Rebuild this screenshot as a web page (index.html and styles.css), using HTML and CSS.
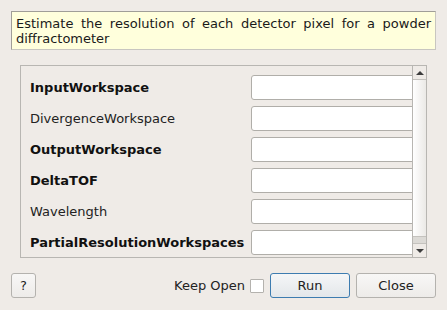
FILE: index.html
```html
<!DOCTYPE html>
<html lang="en">
  <head>
    <meta charset="UTF-8" />
    <title>Estimate Resolution</title>
    <link rel="stylesheet" href="styles.css">
  </head>
  <body>
    <div class="dialog">
      <p class="description">
        Estimate the resolution of each detector pixel for a powder
        diffractometer
      </p>

      <div class="property-box">
        <div class="property-list">
          <div class="property-row">
            <label class="property-label mandatory">InputWorkspace</label>
            <input type="text" class="property-input" />
          </div>
          <div class="property-row">
            <label class="property-label">DivergenceWorkspace</label>
            <input type="text" class="property-input" />
          </div>
          <div class="property-row">
            <label class="property-label mandatory">OutputWorkspace</label>
            <input type="text" class="property-input" />
          </div>
          <div class="property-row">
            <label class="property-label mandatory">DeltaTOF</label>
            <input type="text" class="property-input" />
          </div>
          <div class="property-row">
            <label class="property-label">Wavelength</label>
            <input type="text" class="property-input" />
          </div>
          <div class="property-row">
            <label class="property-label mandatory">PartialResolutionWorkspaces</label>
            <input type="text" class="property-input" />
          </div>
        </div>

        <div class="scrollbar">
          <div class="scroll-button up"><span class="arrow-up"></span></div>
          <div class="scroll-handle"></div>
          <div class="scroll-track"></div>
          <div class="scroll-button down"><span class="arrow-down"></span></div>
        </div>
      </div>

      <div class="button-bar">
        <button type="button" class="dialog-button help-button">?</button>
        <div class="spacer"></div>
        <label class="keep-open">Keep Open <span class="checkbox"></span></label>
        <button type="button" class="dialog-button run-button">Run</button>
        <button type="button" class="dialog-button close-button">Close</button>
      </div>
    </div>
  </body>
</html>
```

FILE: styles.css
```css
/* Whole dialog */
body {
  margin: 0;
  background-color: #efebe7;
  font-family: "DejaVu Sans", sans-serif;
  font-size: 13px;
  color: #222;
}

.dialog {
  padding: 11px 11px 0 11px;
}

/* Yellow description box at the top */
.description {
  margin: 0;
  padding: 4px 4px 3px 4px;
  height: 30px;
  line-height: 15px;
  background-color: #ffffdc;
  border: 1px solid #c8c6c0;
  border-top-color: #a09e98;
  border-left-color: #a09e98;
  text-align: justify;
  color: #1a1a1a;
}

/* Scroll area holding the properties */
.property-box {
  display: flex;
  margin: 15px 9px 0 9px;
  height: 191px;
  border: 1px solid #b8b6b2;
  overflow: hidden;
}

.property-list {
  flex: 1;
  overflow: hidden;
  padding: 9px 0 0 9px;
  display: flex;
  flex-direction: column;
  gap: 6px;
}

.property-row {
  display: flex;
  align-items: center;
  height: 25px;
  flex-shrink: 0;
}

.property-label {
  width: 221px;
  flex-shrink: 0;
  white-space: nowrap;
  color: #222;
}

.property-label.mandatory {
  font-weight: bold;
  color: #111;
}

.property-input {
  flex-shrink: 0;
  width: 170px;
  height: 25px;
  box-sizing: border-box;
  border: 1px solid #b0aea9;
  border-radius: 3px;
  background: #fff;
  margin: 0;
}

/* Vertical scrollbar */
.scrollbar {
  width: 13px;
  flex-shrink: 0;
  border-left: 1px solid #b8b6b2;
  display: flex;
  flex-direction: column;
}

.scroll-button {
  height: 13px;
  display: flex;
  align-items: center;
  justify-content: center;
  background: #efebe7;
}

.scroll-button.up {
  border-bottom: 1px solid #c4c2be;
}

.scroll-button.down {
  border-top: 1px solid #c4c2be;
}

.arrow-up {
  width: 0;
  height: 0;
  border-left: 4px solid transparent;
  border-right: 4px solid transparent;
  border-bottom: 4px solid #3c3c3c;
}

.arrow-down {
  width: 0;
  height: 0;
  border-left: 4px solid transparent;
  border-right: 4px solid transparent;
  border-top: 4px solid #3c3c3c;
}

.scroll-handle {
  flex: 1;
  background: linear-gradient(to right, #ffffff, #ebe9e6);
}

.scroll-track {
  height: 6px;
  background: #dcdad6;
  border-top: 1px solid #c4c2be;
}

/* Buttons along the bottom */
.button-bar {
  display: flex;
  align-items: center;
  margin-top: 15px;
}

.spacer {
  flex: 1;
}

.dialog-button {
  height: 25px;
  box-sizing: border-box;
  border: 1px solid #b4b2ae;
  border-radius: 3px;
  background: linear-gradient(to bottom, #f8f7f6, #edebe9);
  font-family: "DejaVu Sans", sans-serif;
  font-size: 13px;
  color: #222;
  padding: 0;
}

.help-button {
  width: 25px;
}

.run-button {
  width: 80px;
  border-color: #3d7cb0;
  background: linear-gradient(to bottom, #f5f6f7, #e3e7ea);
  margin-right: 6px;
}

.close-button {
  width: 80px;
}

.keep-open {
  display: flex;
  align-items: center;
  gap: 5px;
  margin-right: 6px;
  color: #222;
}

.checkbox {
  width: 14px;
  height: 14px;
  box-sizing: border-box;
  border: 1px solid #b4b2ae;
  background: #fff;
  border-radius: 1px;
}
```
